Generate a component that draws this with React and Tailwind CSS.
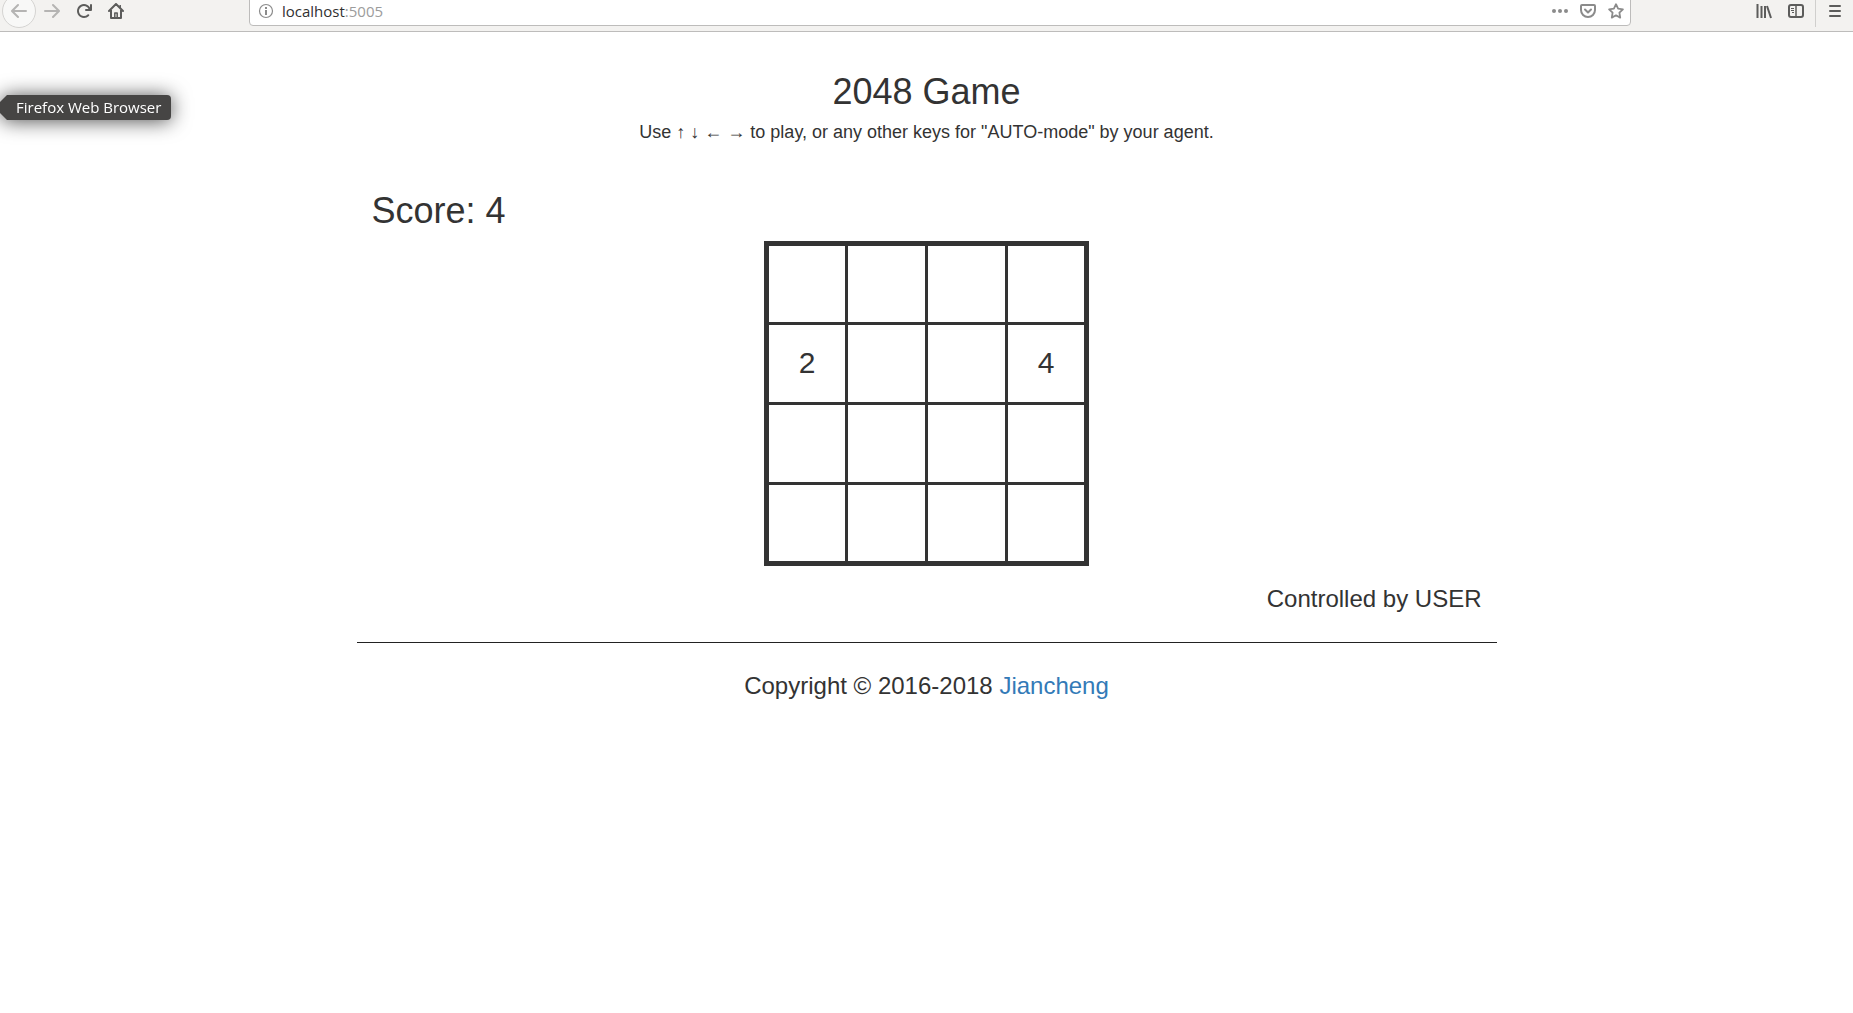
import React from "react";

function Icon({ children, className = "" }) {
  return (
    <svg
      viewBox="0 0 16 16"
      className={`size-4 ${className}`}
      fill="none"
      stroke="currentColor"
      strokeWidth="2"
      strokeLinecap="round"
      strokeLinejoin="round"
      aria-hidden="true"
    >
      {children}
    </svg>
  );
}

function ToolButton({ label, className = "w-8 text-[#5c5c5b]", children }) {
  return (
    <button type="button" aria-label={label} className={`flex h-8 shrink-0 items-center justify-center ${className}`}>
      {children}
    </button>
  );
}

function Toolbar() {
  return (
    <header className="h-8 overflow-hidden border-b border-[#bdbcbb] bg-[#f3f2f0]">
      <div className="flex h-[22px] items-center pl-0.5">
        <button
          type="button"
          aria-label="Back"
          className="flex size-[34px] shrink-0 items-center justify-center rounded-full border border-[#d5d4d2] bg-[#f8f8f7] text-[#b5b4b3]"
        >
          <Icon>
            <path d="M15 8H1.500M7 2 1 8l6 6" />
          </Icon>
        </button>
        <ToolButton label="Forward" className="w-8 text-[#b5b4b3]">
          <Icon>
            <path d="M1 8h13.500M9 2l6 6-6 6" />
          </Icon>
        </ToolButton>
        <ToolButton label="Reload">
          <Icon>
            <path
              fill="currentColor"
              stroke="none"
              d="M15 1a1 1 0 0 0-1 1v2.418A6.995 6.995 0 1 0 8 15a6.954 6.954 0 0 0 4.950-2.050 1 1 0 0 0-1.414-1.414A5.019 5.019 0 1 1 12.549 6H10a1 1 0 0 0 0 2h5a1 1 0 0 0 1-1V2a1 1 0 0 0-1-1z"
            />
          </Icon>
        </ToolButton>
        <ToolButton label="Home">
          <Icon>
            <path d="M1 8l7-7 7 7M3 7v8h10V7" />
            <path strokeWidth="1.500" strokeLinecap="butt" d="M6.800 14v-4h2.400v4" />
            <path strokeWidth="1.500" strokeLinecap="butt" d="M12.200 2v3" />
          </Icon>
        </ToolButton>

        <div className="mx-[117px] flex h-[30px] min-w-0 flex-1 items-center rounded-sm border border-[#bdbcbb] bg-white pl-2">
          <button type="button" aria-label="Site information" className="flex size-4 items-center justify-center text-[#8b8b8b]">
            <Icon>
              <circle cx="8" cy="8" r="6.500" strokeWidth="1.200" />
              <path strokeLinecap="butt" d="M8 7v5M8 4v2" />
            </Icon>
          </button>
          <div
            role="textbox"
            aria-label="Address"
            className="ml-2 flex-1 font-['Open_Sans',sans-serif] text-[15px] text-[#303030]"
          >
            localhost<span className="text-[#9c9c9c]">:5005</span>
          </div>
          <ToolButton label="Page actions" className="w-7 text-[#8b8b8b]">
            <Icon>
              <g fill="currentColor" stroke="none">
                <circle cx="2" cy="8" r="2" />
                <circle cx="8" cy="8" r="2" />
                <circle cx="14" cy="8" r="2" />
              </g>
            </Icon>
          </ToolButton>
          <ToolButton label="Save to Pocket" className="w-7 text-[#8b8b8b]">
            <Icon>
              <path d="M2 2h12a1 1 0 0 1 1 1v4a7 7 0 0 1-14 0V3a1 1 0 0 1 1-1z" />
              <path d="M5 6.500 8 9.500l3-3" />
            </Icon>
          </ToolButton>
          <ToolButton label="Bookmark this page" className="w-7 text-[#8b8b8b]">
            <Icon>
              <path
                strokeWidth="1.800"
                d="M8 1.200l2.100 4.400 4.800.700-3.500 3.400.800 4.900L8 12.300l-4.200 2.300.800-4.900L1.100 6.300l4.800-.700z"
              />
            </Icon>
          </ToolButton>
        </div>

        <ToolButton label="Library">
          <Icon>
            <path strokeLinecap="butt" d="M1.500 1v14M5.500 3v12M9 3v12M11 3l4 12" />
          </Icon>
        </ToolButton>
        <ToolButton label="Sidebars">
          <Icon>
            <rect x="1" y="2" width="14" height="12" rx="2" />
            <path strokeWidth="1.500" d="M8 2v12" />
            <path strokeWidth="1" strokeLinecap="butt" d="M3 5.500h3M3 7.500h3M4 9.500h2" />
          </Icon>
        </ToolButton>
        <div className="ml-[3px] h-8 w-px shrink-0 bg-[#d0cfcd]" />
        <ToolButton label="Menu" className="w-[37px] text-[#5c5c5b]">
          <Icon>
            <path d="M3 3h10M3 8h10M3 13h10" />
          </Icon>
        </ToolButton>
      </div>
    </header>
  );
}

function LauncherTooltip() {
  return (
    <div className="absolute top-[95px] left-0 drop-shadow-[0_1px_10px_rgba(0,0,0,0.7)]">
      <div
        role="tooltip"
        className="rounded-r-sm bg-[#464544] pr-2.5 pl-4 font-['Open_Sans',sans-serif] text-[15px] leading-[25px] whitespace-nowrap text-white [clip-path:polygon(7px_0,100%_0,100%_100%,7px_100%,0_18px,0_7px)]"
      >
        Firefox Web Browser
      </div>
    </div>
  );
}

const board = [
  [0, 0, 0, 0],
  [2, 0, 0, 4],
  [0, 0, 0, 0],
  [0, 0, 0, 0],
];

function Board() {
  return (
    <table className="mx-auto mt-2.5 table-fixed border-collapse border-[5px] border-[#333]">
      <tbody>
        {board.map((row, r) => (
          <tr key={r}>
            {row.map((value, c) => (
              <td key={c} className="size-20 border-[3px] border-[#333] p-0 pb-0.5 text-center text-3xl">
                {value || ""}
              </td>
            ))}
          </tr>
        ))}
      </tbody>
    </table>
  );
}

export default function App() {
  return (
    <div className="relative min-h-screen bg-white font-['Liberation_Sans',Arial,sans-serif] text-[#333]">
      <Toolbar />
      <LauncherTooltip />
      <main className="mx-auto max-w-[1140px] pt-10">
        <div className="text-center">
          <h1 className="text-4xl">2048 Game</h1>
          <p className="mt-2.5 text-lg leading-5">
            Use ↑ ↓ ← → to play, or any other keys for "AUTO-mode" by your agent.
          </p>
        </div>
        <section className="mt-[49px] px-[15px]">
          <h2 className="text-4xl">Score: 4</h2>
          <Board />
          <p className="mt-5 text-right text-2xl leading-[26px]">Controlled by USER</p>
        </section>
        <hr className="mt-[30px] border-t border-[#222]" />
        <footer className="mt-[30px] text-center text-2xl leading-[26px]">
          Copyright © 2016-2018{" "}
          <a href="#jiancheng" className="text-[#337ab7]">
            Jiancheng
          </a>
        </footer>
      </main>
    </div>
  );
}
